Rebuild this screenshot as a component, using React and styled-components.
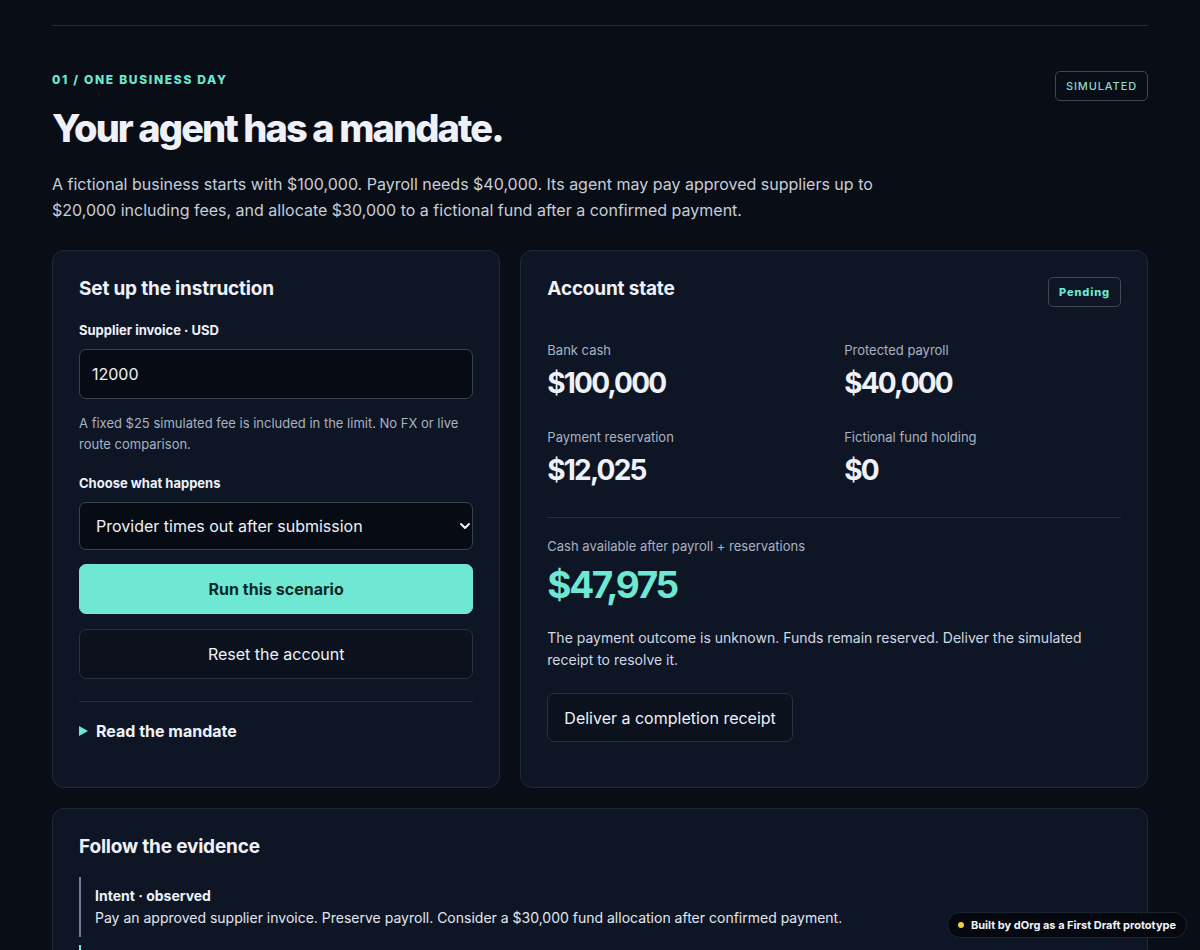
import React from 'react';
import styled, { createGlobalStyle } from 'styled-components';

const GlobalStyle = createGlobalStyle`
  html, body {
    margin: 0;
    padding: 0;
    background: #090d16;
    color: #e8ecf4;
    font-family: Inter, "Noto Sans", sans-serif;
    -webkit-font-smoothing: antialiased;
    scrollbar-width: none;
  }
  html::-webkit-scrollbar { width: 0; height: 0; }
  * { box-sizing: border-box; }
`;

const Page = styled.main`
  max-width: 1096px;
  margin: 0 auto;
  padding: 25px 0 80px;
`;

const Section = styled.section`
  border-top: 1px solid #232b38;
  padding-top: 45px;
`;

const HeadRow = styled.div`
  display: flex;
  justify-content: space-between;
  align-items: flex-start;
`;

const Eyebrow = styled.div`
  color: #6ee7cf;
  font-size: 12px;
  font-weight: 800;
  letter-spacing: 0.14em;
  text-transform: uppercase;
  line-height: 18px;
`;

const Badge = styled.span`
  display: inline-flex;
  align-items: center;
  height: ${p => p.$h || 30}px;
  padding: 0 ${p => p.$px || 10}px;
  border: 1px solid ${p => p.$border || '#3a4a55'};
  border-radius: 5px;
  color: ${p => p.$color || '#8fd6c8'};
  font-size: 11px;
  font-weight: ${p => p.$weight || 500};
  letter-spacing: 0.08em;
  text-transform: ${p => p.$upper ? 'uppercase' : 'none'};
`;

const Title = styled.h1`
  margin: 2px 0 0;
  font-size: 38px;
  line-height: 50px;
  font-weight: 800;
  letter-spacing: -0.05em;
  color: #eef1f8;
`;

const Lead = styled.p`
  margin: 18px 0 0;
  max-width: 860px;
  font-size: 16px;
  line-height: 26px;
  color: #c7cdd9;
`;

const Grid = styled.div`
  display: grid;
  grid-template-columns: 5fr 7fr;
  gap: 20px;
  margin-top: 27px;
`;

const Card = styled.div`
  background: #0e1626;
  border: 1px solid #1f2938;
  border-radius: 12px;
  padding: 26px 26px ${p => p.$pb || 26}px;
  display: flex;
  flex-direction: column;
  margin-top: ${p => p.$mt || 0}px;
`;

const CardHead = styled.div`
  display: flex;
  justify-content: space-between;
  align-items: flex-start;
`;

const CardTitle = styled.h2`
  margin: 0;
  font-size: 19px;
  line-height: 24px;
  font-weight: 700;
  letter-spacing: -0.01em;
  color: #eef1f8;
`;

const Label = styled.label`
  display: block;
  margin-top: ${p => p.$mt || 0}px;
  font-size: 13px;
  line-height: 18px;
  font-weight: 700;
  color: #eef1f8;
`;

const Input = styled.input`
  display: block;
  width: 100%;
  height: 50px;
  margin-top: 10px;
  padding: 0 12px;
  background: #070b13;
  border: 1px solid #3a4352;
  border-radius: 7px;
  color: #eef1f8;
  font-family: Inter, sans-serif;
  font-size: 16px;
  outline: none;
`;

const Hint = styled.p`
  margin: 14px 0 0;
  font-size: 13px;
  line-height: 21px;
  color: #aab2c0;
`;

const SelectWrap = styled.div`
  position: relative;
  margin-top: 10px;
`;

const Select = styled.select`
  display: block;
  width: 100%;
  height: 48px;
  padding: 0 16px;
  appearance: none;
  background: #070b13;
  border: 1px solid #3a4352;
  border-radius: 7px;
  color: #eef1f8;
  font-family: Inter, sans-serif;
  font-size: 16px;
  outline: none;
`;

const Chevron = styled.svg`
  position: absolute;
  right: 2px;
  top: 19px;
  pointer-events: none;
`;

const Button = styled.button`
  display: flex;
  align-items: center;
  justify-content: center;
  width: ${p => p.$auto ? 'auto' : '100%'};
  align-self: ${p => p.$auto ? 'flex-start' : 'stretch'};
  height: ${p => p.$h || 50}px;
  margin-top: ${p => p.$mt || 0}px;
  padding: 0 16px;
  border-radius: 7px;
  border: 1px solid ${p => p.$primary ? '#6ee7d3' : '#273142'};
  background: ${p => p.$primary ? '#6ee7d3' : '#0b111d'};
  color: ${p => p.$primary ? '#0b2a26' : '#eef1f8'};
  font-family: Inter, sans-serif;
  font-size: 16px;
  font-weight: ${p => p.$primary ? 700 : 400};
  cursor: pointer;
`;

const Rule = styled.hr`
  border: 0;
  border-top: 1px solid #232d3c;
  margin: ${p => p.$m || '22px 0 0'};
`;

const Details = styled.details`
  margin-top: 17px;
  summary {
    list-style: none;
    display: flex;
    align-items: center;
    gap: 8px;
    font-size: 16px;
    line-height: 24px;
    font-weight: 700;
    color: #eef1f8;
    cursor: pointer;
  }
  summary::-webkit-details-marker { display: none; }
`;

const Caret = styled.span`
  width: 0;
  height: 0;
  border-top: 5px solid transparent;
  border-bottom: 5px solid transparent;
  border-left: 9px solid #6ee7d3;
`;

const Stats = styled.div`
  display: grid;
  grid-template-columns: 1fr 1fr;
  column-gap: 20px;
  row-gap: 27px;
  margin-top: 34px;
`;

const Stat = styled.div`
  display: flex;
  flex-direction: column;
  margin-top: ${p => p.$mt || 0}px;
`;

const StatLabel = styled.div`
  font-size: 13px;
  line-height: 18px;
  color: #aab2c0;
`;

const StatValue = styled.div`
  margin-top: ${p => p.$big ? 8 : 6}px;
  font-size: ${p => p.$big ? 37 : 28}px;
  line-height: ${p => p.$big ? 44 : 36}px;
  font-weight: 700;
  letter-spacing: -0.065em;
  color: ${p => p.$accent ? '#6ee7d3' : '#eef1f8'};
`;

const Note = styled.p`
  margin: 20px 0 0;
  font-size: 14px;
  line-height: 22px;
  color: #d2d8e3;
`;

const Evidence = styled.div`
  margin-top: 18px;
  display: flex;
  flex-direction: column;
  gap: 8px;
`;

const Item = styled.div`
  border-left: 2px solid ${p => p.$tone || '#6f7c95'};
  padding: 9px 0 8px 14px;
`;

const ItemTitle = styled.div`
  font-size: 14px;
  line-height: 20px;
  font-weight: 700;
  color: #eef1f8;
`;

const ItemText = styled.div`
  margin-top: 1px;
  font-size: 14px;
  line-height: 22px;
  color: #e2e6ee;
`;

const Credit = styled.div`
  position: fixed;
  right: 13px;
  bottom: 12px;
  display: flex;
  align-items: center;
  gap: 7px;
  height: 26px;
  padding: 0 10px;
  background: #05080e;
  border: 1px solid #1e2633;
  border-radius: 13px;
  font-size: 11px;
  font-weight: 700;
  color: #f1f3f7;
`;

const Dot = styled.span`
  width: 6px;
  height: 6px;
  border-radius: 50%;
  background: #f5c84c;
`;

const stats = [
  { label: 'Bank cash', value: '$100,000' },
  { label: 'Protected payroll', value: '$40,000' },
  { label: 'Payment reservation', value: '$12,025' },
  { label: 'Fictional fund holding', value: '$0' },
];

const evidence = [
  {
    title: 'Intent · observed',
    text: 'Pay an approved supplier invoice. Preserve payroll. Consider a $30,000 fund allocation after confirmed payment.',
    tone: '#6f7c95',
  },
  {
    title: 'Mandate · checked',
    text: 'Supplier is approved. $12,025 including fees is within the $20,000 limit. Payroll stays protected.',
    tone: '#6ee7d3',
  },
];

export default function App() {
  return (
    <>
      <GlobalStyle />
      <Page>
        <Section>
          <HeadRow>
            <Eyebrow>01 / One business day</Eyebrow>
            <Badge $upper>Simulated</Badge>
          </HeadRow>
          <Title>Your agent has a mandate.</Title>
          <Lead>
            A fictional business starts with $100,000. Payroll needs $40,000. Its agent may pay approved suppliers up to
            $20,000 including fees, and allocate $30,000 to a fictional fund after a confirmed payment.
          </Lead>

          <Grid>
            <Card $pb={30}>
              <CardTitle>Set up the instruction</CardTitle>
              <Label $mt={20} htmlFor="invoice">Supplier invoice · USD</Label>
              <Input id="invoice" defaultValue="12000" />
              <Hint>A fixed $25 simulated fee is included in the limit. No FX or live route comparison.</Hint>
              <Label $mt={19} htmlFor="scenario">Choose what happens</Label>
              <SelectWrap>
                <Select id="scenario" defaultValue="timeout">
                  <option value="timeout">Provider times out after submission</option>
                  <option value="ok">Provider confirms the payment</option>
                  <option value="reject">Provider rejects the payment</option>
                </Select>
                <Chevron width="12" height="10" viewBox="0 0 12 10">
                  <path d="M2 3l4 4 4-4" fill="none" stroke="#eef1f8" strokeWidth="2" strokeLinecap="round" strokeLinejoin="round" />
                </Chevron>
              </SelectWrap>
              <Button $primary $mt={14}>Run this scenario</Button>
              <Button $mt={15}>Reset the account</Button>
              <Rule />
              <Details>
                <summary><Caret />Read the mandate</summary>
              </Details>
            </Card>

            <Card $pb={45}>
              <CardHead>
                <CardTitle>Account state</CardTitle>
                <Badge $weight={800} $px={10} $color="#6ee7d3">Pending</Badge>
              </CardHead>
              <Stats>
                {stats.map(s => (
                  <Stat key={s.label}>
                    <StatLabel>{s.label}</StatLabel>
                    <StatValue>{s.value}</StatValue>
                  </Stat>
                ))}
              </Stats>
              <Rule $m="29px 0 0" />
              <Stat $mt={19}>
                <StatLabel>Cash available after payroll + reservations</StatLabel>
                <StatValue $big $accent>$47,975</StatValue>
              </Stat>
              <Note>
                The payment outcome is unknown. Funds remain reserved. Deliver the simulated receipt to resolve it.
              </Note>
              <Button $auto $h={49} $mt={22}>Deliver a completion receipt</Button>
            </Card>
          </Grid>

          <Card $mt={20}>
            <CardTitle>Follow the evidence</CardTitle>
            <Evidence>
              {evidence.map(e => (
                <Item key={e.title} $tone={e.tone}>
                  <ItemTitle>{e.title}</ItemTitle>
                  <ItemText>{e.text}</ItemText>
                </Item>
              ))}
            </Evidence>
          </Card>
        </Section>
      </Page>
      <Credit><Dot />Built by dOrg as a First Draft prototype</Credit>
    </>
  );
}
